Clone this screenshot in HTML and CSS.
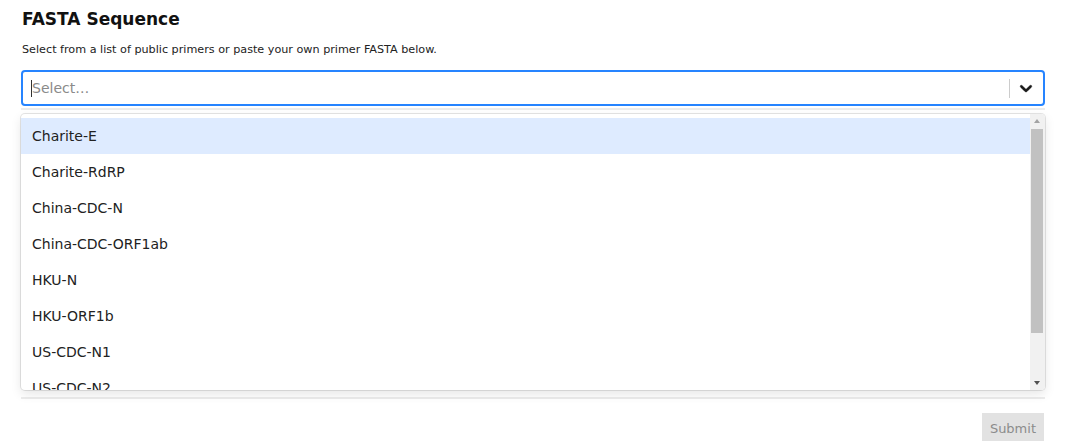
FILE: index.html
```html
<!DOCTYPE html>
<html>
<head>
<meta charset="utf-8">
<link rel="stylesheet" href="styles.css">
</head>
<body>
<div class="page">
  <h2 class="title">FASTA Sequence</h2>
  <p class="hint">Select from a list of public primers or paste your own primer FASTA below.</p>
  <div class="picker">
    <div class="control">
      <div class="value"><span class="caret"></span><span class="placeholder">Select…</span></div>
      <div class="indicators">
        <span class="sep"></span>
        <span class="chev">
          <svg width="20" height="20" viewBox="0 0 20 20"><path d="M4.516 7.548c0.436-0.446 1.043-0.481 1.576 0l3.908 3.747 3.908-3.747c0.533-0.481 1.141-0.446 1.574 0 0.436 0.445 0.408 1.197 0 1.615-0.406 0.418-4.695 4.502-4.695 4.502-0.217 0.223-0.502 0.335-0.787 0.335s-0.57-0.112-0.789-0.335c0 0-4.287-4.084-4.695-4.502s-0.436-1.17 0-1.615z" fill="#1a1a1a" stroke="#1a1a1a" stroke-width="0.4"/></svg>
        </span>
      </div>
    </div>
    <div class="menu">
      <div class="list">
        <div class="opt active">Charite-E</div>
        <div class="opt">Charite-RdRP</div>
        <div class="opt">China-CDC-N</div>
        <div class="opt">China-CDC-ORF1ab</div>
        <div class="opt">HKU-N</div>
        <div class="opt">HKU-ORF1b</div>
        <div class="opt">US-CDC-N1</div>
        <div class="opt">US-CDC-N2</div>
      </div>
      <div class="scrollbar">
        <div class="arrow up"></div>
        <div class="track"><div class="thumb"></div></div>
        <div class="arrow down"></div>
      </div>
    </div>
  </div>
  <div class="fasta"></div>
  <div class="actions"><button class="submit">Submit</button></div>
</div>
</body>
</html>
```
FILE: styles.css
```css
html, body { margin: 0; padding: 0; background: #fff; }
body { font-family: "DejaVu Sans", Verdana, sans-serif; color: #111; overflow: hidden; }
.page { padding: 9px 35px 0 21px; }
.title { font-size: 17px; font-weight: bold; margin: 0 0 0 1px; line-height: 20px; color: #111; }
.hint { font-size: 11.2px; margin: 14px 0 0 1px; line-height: 14px; color: #222; }
.picker { position: relative; margin-top: 13px; }
.control { height: 36px; box-sizing: border-box; border: 2px solid #2684ff; border-radius: 4px; display: flex; align-items: center; background: #fff; }
.value { flex: 1; display: flex; align-items: center; padding-left: 8px; font-size: 14px; }
.caret { width: 1px; height: 17px; background: #333; margin-right: 0; }
.placeholder { color: #8a8a8a; }
.indicators { display: flex; align-items: center; height: 100%; }
.sep { width: 1px; height: 19px; background: #ccc; }
.chev { width: 20px; height: 20px; padding: 0 7px 0 6px; display: flex; align-items: center; }
.menu { position: absolute; top: 44px; left: 0; right: 0; background: #fff; border-radius: 4px; box-shadow: 0 0 0 1px rgba(0,0,0,0.1), 0 4px 11px rgba(0,0,0,0.1); z-index: 2; display: flex; overflow: hidden; }
.list { flex: 1; height: 272px; padding-top: 4px; overflow: hidden; }
.opt { font-size: 14px; line-height: 20px; padding: 8px 11px; color: #222; }
.opt.active { background: #deebff; }
.scrollbar { width: 15px; display: flex; flex-direction: column; background: #f1f1f1; }
.arrow { height: 15px; position: relative; }
.arrow.up::after, .arrow.down::after { content: ""; position: absolute; left: 4px; border-left: 3.5px solid transparent; border-right: 3.5px solid transparent; }
.arrow.up::after { top: 5px; border-bottom: 4px solid #a3a3a3; }
.arrow.down::after { top: 6px; border-top: 4px solid #505050; }
.track { flex: 1; padding: 0 2px 0 1px; }
.thumb { height: 204px; background: #c1c1c1; }
.fasta { height: 291px; margin-top: 2px; box-sizing: border-box; border-top: 2px solid #ececec; border-bottom: 2px solid #ececec; }
.actions { display: flex; justify-content: flex-end; margin-top: 14px; padding-right: 1px; }
.submit { font-family: "DejaVu Sans", Verdana, sans-serif; font-size: 13px; color: #8c8c8c; background: #e2e2e2; border: none; height: 30px; padding: 0 8px; border-radius: 0; }
```
